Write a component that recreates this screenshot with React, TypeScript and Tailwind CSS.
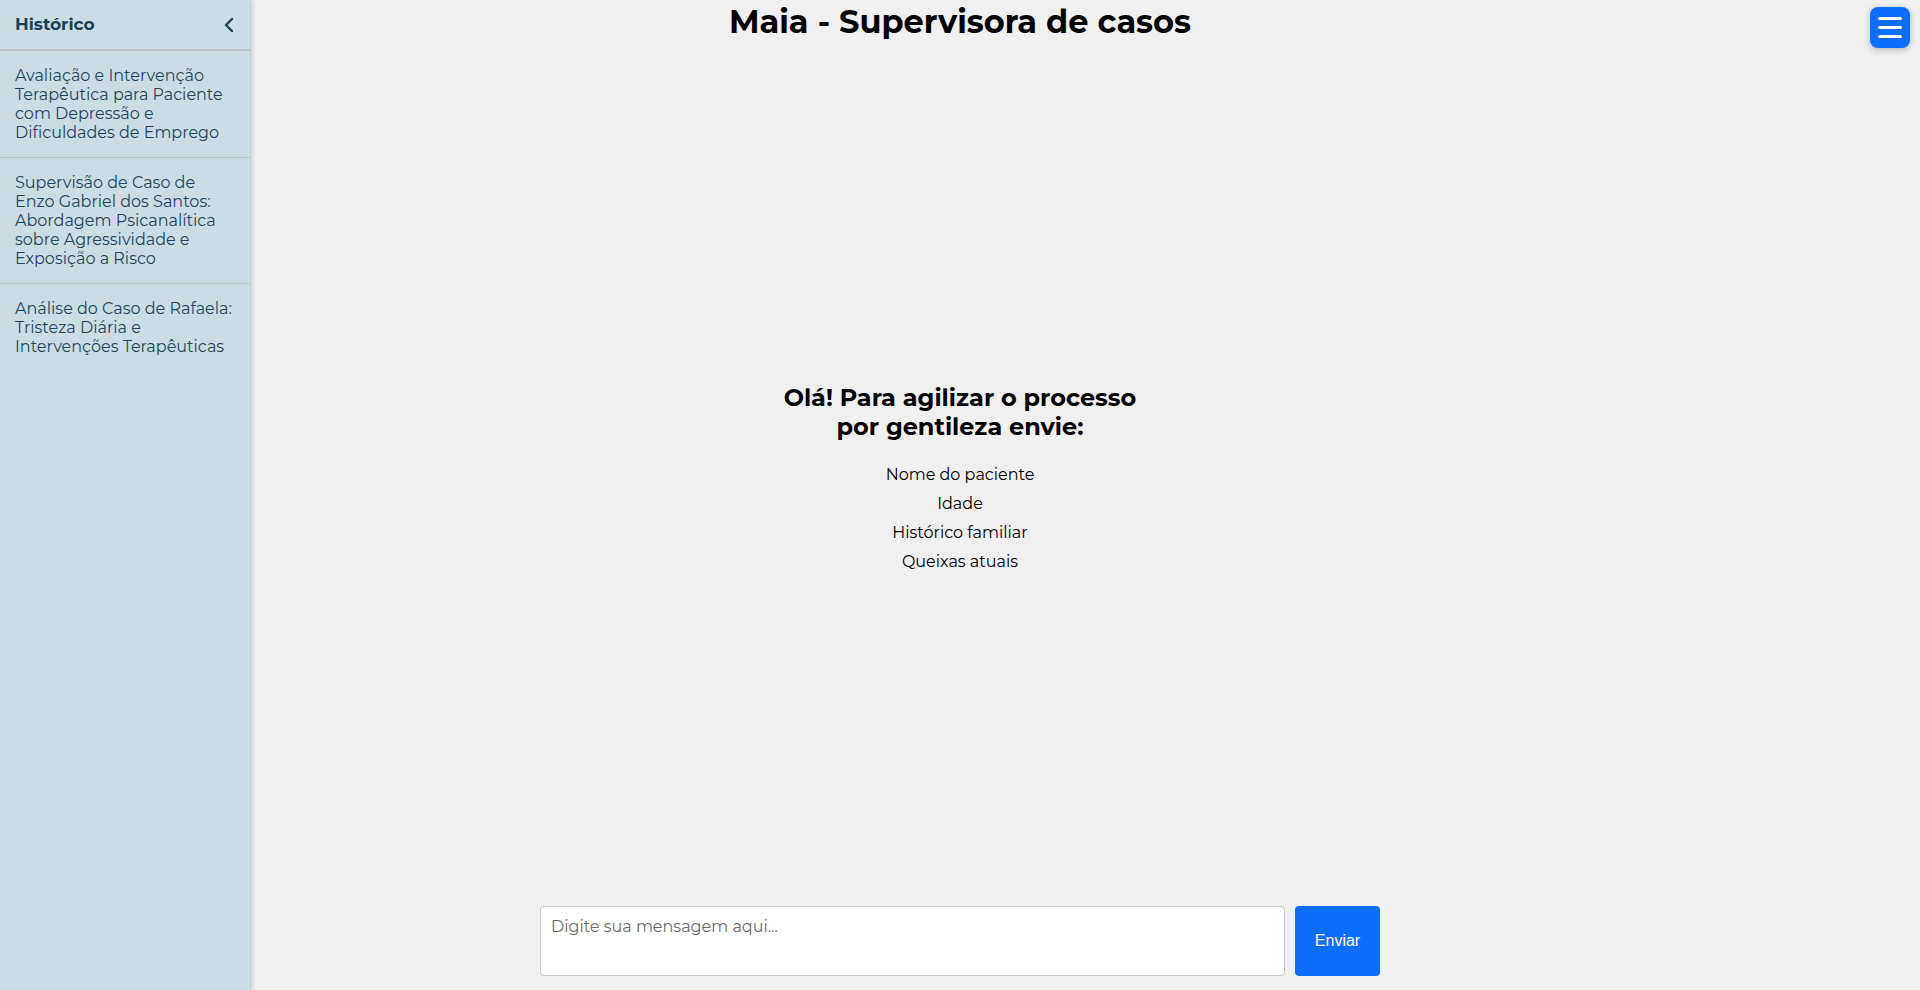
import React from "react";

const historyItems = [
  "Avaliação e Intervenção Terapêutica para Paciente com Depressão e Dificuldades de Emprego",
  "Supervisão de Caso de Enzo Gabriel dos Santos: Abordagem Psicanalítica sobre Agressividade e Exposição a Risco",
  "Análise do Caso de Rafaela: Tristeza Diária e Intervenções Terapêuticas",
];

const requested = ["Nome do paciente", "Idade", "Histórico familiar", "Queixas atuais"];

export default function App() {
  return (
    <div className="relative h-screen w-full overflow-hidden bg-[#f0f0f0] font-['Montserrat','Noto_Sans','DejaVu_Sans',sans-serif] text-black">
      {/* Sidebar (drawer over the page) */}
      <aside className="absolute left-0 top-0 z-10 flex h-full w-[251px] flex-col border-r border-[#c4cdd1] bg-[#cbdde4] shadow-[2px_0_4px_rgba(0,0,0,0.12)]">
        <div className="flex h-[51px] items-center justify-between border-b-2 border-[#b9c2c6] pl-[15px] pr-[16px]">
          <span className="text-[17px] font-bold text-[#1b3f58]">Histórico</span>
          <svg width="10" height="16" viewBox="0 0 10 16" fill="none">
            <path d="M8 2L2 8l6 6" stroke="#1b3f58" strokeWidth="2.4" strokeLinecap="round" strokeLinejoin="round" />
          </svg>
        </div>
        {historyItems.map((item) => (
          <div
            key={item}
            className="cursor-pointer border-b border-[#b5c5cc] px-[15px] py-[15px] text-[16px] leading-[19px] text-[#1c4560] last:border-b-0"
          >
            {item}
          </div>
        ))}
      </aside>

      {/* Menu button */}
      <button className="absolute right-[10px] top-[7px] z-10 flex h-[41px] w-10 flex-col items-center justify-center gap-[6px] rounded-lg bg-[#0d6efd] shadow-[0_2px_6px_rgba(0,0,0,0.25)]">
        <span className="block h-[3px] w-6 rounded-full bg-white" />
        <span className="block h-[3px] w-6 rounded-full bg-white" />
        <span className="block h-[3px] w-6 rounded-full bg-white" />
      </button>

      <div className="flex h-full flex-col items-center">
        <h1 className="mt-[3px] text-[32px] font-bold leading-[38px]">Maia - Supervisora de casos</h1>

        <div className="flex w-full flex-1 flex-col items-center justify-center pt-[12px]">
          <h2 className="mb-[19px] text-center text-[24px] font-bold leading-[29px]">
            Olá! Para agilizar o processo
            <br />
            por gentileza envie:
          </h2>
          {requested.map((r) => (
            <p key={r} className="text-center text-[16px] leading-[29px]">
              {r}
            </p>
          ))}
        </div>

        <div className="mb-[14px] flex gap-[10px]">
          <textarea
            placeholder="Digite sua mensagem aqui..."
            className="h-[70px] w-[745px] resize-none rounded-[4px] border border-[#c8c8c8] bg-white px-[10px] py-[8px] text-[16px] placeholder:text-[#6b6b6b] focus:outline-none"
          />
          <button className="h-[70px] w-[85px] rounded-[4px] bg-[#0d6efd] font-['Liberation_Sans',Arial,sans-serif] text-[16px] text-white">
            Enviar
          </button>
        </div>
      </div>
    </div>
  );
}
